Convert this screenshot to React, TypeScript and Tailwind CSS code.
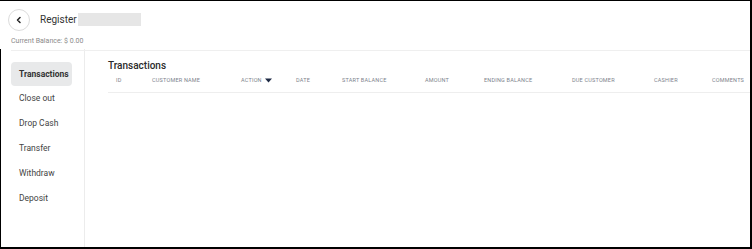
import React from "react";

const cols: { label: string; w: string; caret?: boolean }[] = [
  { label: "ID", w: "w-[36px]" },
  { label: "CUSTOMER NAME", w: "w-[89px]" },
  { label: "ACTION", w: "w-[55px]", caret: true },
  { label: "DATE", w: "w-[46px]" },
  { label: "START BALANCE", w: "w-[83px]" },
  { label: "AMOUNT", w: "w-[59px]" },
  { label: "ENDING BALANCE", w: "w-[88px]" },
  { label: "DUE CUSTOMER", w: "w-[82px]" },
  { label: "CASHIER", w: "w-[58px]" },
  { label: "COMMENTS", w: "w-[50px]" },
];

const items = ["Transactions", "Close out", "Drop Cash", "Transfer", "Withdraw", "Deposit"];

export default function App() {
  return (
    <div
      className="w-[752px] h-[249px] bg-white border-t border-r-2 border-b-2 border-black flex flex-col overflow-hidden"
      style={{ fontFamily: "Roboto, 'Open Sans', sans-serif" }}
    >
      <div className="flex items-center h-[36px] pl-[8px] pt-[1px]">
        <div className="w-[22px] h-[22px] rounded-full border border-[#dcdcdc] flex items-center justify-center">
          <svg width="8" height="8" viewBox="0 0 8 8">
            <path d="M5 1.5 L2.5 4 L5 6.5" fill="none" stroke="#222" strokeWidth="1.5" strokeLinecap="round" strokeLinejoin="round" />
          </svg>
        </div>
        <span className="ml-[10px] text-[10px] text-[#333]">Register</span>
        <div className="w-[63px] h-[13px] bg-[#e6e6e6] ml-[1px]" />
      </div>
      <div className="pl-[11px] text-[7px] text-[#8a8a8a] h-[12px] leading-[8px]">Current Balance: $ 0.00</div>
      <div className="flex flex-1 border-l border-black">
        <div className="w-[84px] border-r border-[#ececec] flex flex-col">
          <div className="ml-[10px] mt-[1px] border-t border-[#efefef] w-[74px]" />
          <div className="pl-[10px] pt-[11px] flex flex-col">
            {items.map((it, i) => (
              <div
                key={it}
                className={
                  i === 0
                    ? "w-[61px] h-[24px] rounded-[4px] bg-[#e8e9ea] flex items-center pl-[8px] text-[8.5px] font-bold text-[#333]"
                    : "h-[25px] flex items-center pl-[8px] text-[8.5px] text-[#444]"
                }
              >
                {it}
              </div>
            ))}
          </div>
        </div>
        <div className="flex-1 flex flex-col">
          <div className="border-t border-[#efefef] mt-[1px]" />
          <div className="pl-[23px] pt-[9px]">
            <div className="text-[10px] font-medium text-[#2a2a2a] leading-[12px]">Transactions</div>
            <div className="flex items-center h-[21px] pb-[4px] pl-[8px] border-b border-[#eeeeee]">
              {cols.map((c) => (
                <div key={c.label} className={`${c.w} shrink-0 flex items-center text-[5.5px] font-normal text-[#7d838c] tracking-[0.2px]`}>
                  {c.label}
                  {c.caret && (
                    <svg width="7" height="5" viewBox="0 0 7 5" className="ml-[3px]">
                      <path d="M0 0.5 L7 0.5 L3.5 4.5 Z" fill="#1f2a44" />
                    </svg>
                  )}
                </div>
              ))}
            </div>
          </div>
        </div>
      </div>
    </div>
  );
}
